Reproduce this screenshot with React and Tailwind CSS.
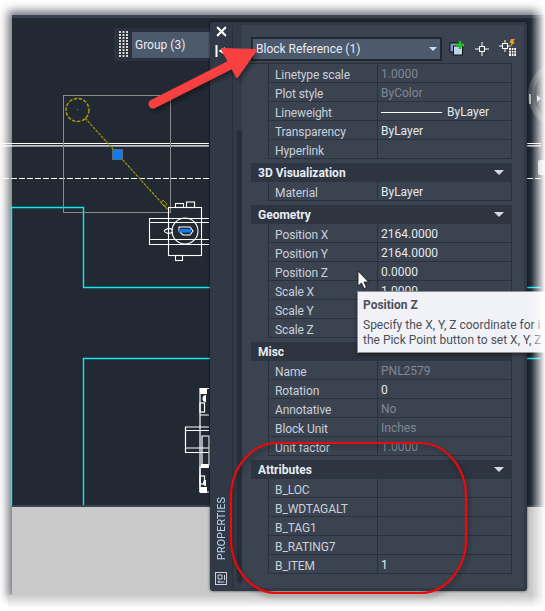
import React from 'react';
import { X } from 'lucide-react';

const Row = ({ label, value, dim, children }) => (
    <div className="flex h-[19px] ml-[17px] border-b border-[#2a313c]">
        <div className="w-[110px] shrink-0 border-x border-[#2a313c] pl-[6px] text-[#c9d0da] leading-[22px] tracking-[-0.1px] truncate">{label}</div>
        <div className={`flex-1 border-r border-[#2a313c] pl-[3px] pt-[2px] leading-[16px] flex items-center ${dim ? 'text-[#7f8794]' : 'text-[#e4e8ee]'}`}>
            {children || value}
        </div>
    </div>
);

const Section = ({ title, rows, arrow = true }) => (
    <div className="mt-[4px]">
        <div className="h-[19px] bg-[#2e3440] flex items-center justify-between pl-[7px] pr-[8px] font-bold text-[#e8edf4]">
            <span>{title}</span>
            {arrow && <span className="w-0 h-0 border-x-[5px] border-x-transparent border-t-[5px] border-t-[#d5d9df]"></span>}
        </div>
        {rows.map((r) => <Row key={r.label} {...r} />)}
    </div>
);

const general = [
    { label: 'Linetype scale', value: '1.0000', dim: true },
    { label: 'Plot style', value: 'ByColor', dim: true },
    {
        label: 'Lineweight',
        children: (
            <span className="flex items-center gap-[5px]">
                <span className="w-[61px] h-px bg-white"></span>ByLayer
            </span>
        ),
    },
    { label: 'Transparency', value: 'ByLayer' },
    { label: 'Hyperlink', value: '' },
];
const viz = [{ label: 'Material', value: 'ByLayer' }];
const geometry = [
    { label: 'Position X', value: '2164.0000' },
    { label: 'Position Y', value: '2164.0000' },
    { label: 'Position Z', value: '0.0000' },
    { label: 'Scale X', value: '1.0000' },
    { label: 'Scale Y', value: '' },
    { label: 'Scale Z', value: '' },
];
const misc = [
    { label: 'Name', value: 'PNL2579', dim: true },
    { label: 'Rotation', value: '0' },
    { label: 'Annotative', value: 'No', dim: true },
    { label: 'Block Unit', value: 'Inches', dim: true },
    { label: 'Unit factor', value: '1.0000', dim: true },
];
const attributes = [
    { label: 'B_LOC', value: '' },
    { label: 'B_WDTAGALT', value: '' },
    { label: 'B_TAG1', value: '' },
    { label: 'B_RATING7', value: '' },
    { label: 'B_ITEM', value: '1' },
];

// the drawing on the model space canvas
const CanvasDrawing = () => (
    <svg className="absolute left-0 top-0" width="545" height="611" fill="none">
        {/* view cube ring, mostly faded out */}
        <circle cx="562" cy="95" r="31" stroke="#4b5058" strokeWidth="6" />
        <path d="M529 94H531V104H529Z" fill="#b8b8b8" />
        <path d="M537 95L541 98.5L537 102Z" fill="#d8d8d8" />
        <rect x="538" y="160" width="12" height="15" rx="2" fill="#c4c6c9" />
        {/* block outlines */}
        <path d="M11.5 505V207.5H83.5V287.5H210M83.5 505V358.5H210" stroke="#0cecf0" strokeWidth="1.4" />
        <path d="M527 287.5H541M527 358.5H541" stroke="#0cecf0" strokeWidth="1.4" />
        <path d="M2 143.5H209M2 145.8H209M527 143.5H541M527 145.8H541" stroke="#fff" strokeWidth="1.2" />
        <path d="M3 178.5H209M527 178.5H541" stroke="#fff" strokeDasharray="6 2" />
        <rect x="63.5" y="95.5" width="107" height="117" stroke="#8b8b8b" />
        {/* grip circle and leader */}
        <circle cx="77.5" cy="110" r="11.5" stroke="#a8a400" strokeWidth="1.4" strokeDasharray="3.5 1.5" />
        <rect x="77" y="109" width="1" height="1" fill="#c86a20" />
        <path d="M85 118L168 210" stroke="#9c9800" strokeWidth="1.2" strokeDasharray="3 1" />
        <path d="M163 200L167 204L165 207L161 203Z" stroke="#9c9800" />
        <rect x="112.5" y="149.5" width="10" height="10" fill="#0a7df5" stroke="#5d6a78" />
        {/* symbol */}
        <g stroke="#fff" strokeWidth="1.1">
            <rect x="168.5" y="207.5" width="33" height="48" />
            <rect x="175.5" y="203.5" width="8" height="4" />
            <rect x="186.5" y="202" width="8" height="5.5" />
            <rect x="175.5" y="255.5" width="7" height="5" />
            <path d="M209 218.5H149.5V244.5H209M149.5 222.5H209M149.5 239.5H209" />
            <circle cx="185" cy="231" r="13" />
            <path d="M164 231C166 228 170 228 173 230M164 231C166 234 170 234 173 232M179 227H190L193 231L190 235H183L179 231Z" />
        </g>
        <rect x="179" y="229" width="12" height="3.5" fill="#0a7df5" />
        {/* second symbol, cut off by the palette */}
        <g stroke="#fff" strokeWidth="1.2">
            <path d="M209 388.5H200V415H209M200 415V492M209 427H185.5V452.5H209M185.5 430.5H209M185.5 448H209" />
            <path d="M209 467H200V492H209M202 436H209V465H202Z" />
            <rect x="200" y="403" width="4.5" height="9" />
            <rect x="200" y="476" width="4.5" height="8" />
        </g>
        <path d="M200 388H207V394H200ZM201 464H209V468H201ZM200 487H207V493H200Z" fill="#fff" />
        <path d="M206 395a3.5 3.5 0 1 0 0 7ZM206 480a3 3 0 1 0 0 6Z" fill="#fff" />
    </svg>
);

const GripDots = () => (
    <svg width="9" height="27" fill="#d8d8d8" className="shrink-0">
        {[0, 1, 2, 3, 4, 5, 6, 7, 8].map((i) => (
            <g key={i}>
                <rect x="0" y={i * 3} width="2" height="2" />
                <rect x="3.5" y={i * 3} width="2" height="2" />
                <rect x="7" y={i * 3} width="2" height="2" />
            </g>
        ))}
    </svg>
);

export default function App() {
    return (
        <div className="relative w-[545px] h-[611px] bg-white overflow-hidden font-['Roboto',sans-serif] text-[12px]">
            {/* app window */}
            <div className="absolute left-[12px] top-[15px] w-[540px] h-[581px] bg-[#c9c9c9] shadow-[-1px_-1px_9px_3px_rgba(30,35,45,0.65)]">
                <div className="h-[3px] bg-[#3b4352]"></div>
                <div className="h-[487px] bg-[#222933]"></div>
                <div className="h-[2px] bg-[#3b4352]"></div>
            </div>
            <div className="absolute left-[8px] top-[595px] w-[540px] h-[13px] bg-gradient-to-b from-[#c9c9c9] to-white"></div>
            <CanvasDrawing />

            {/* selection filter */}
            <div className="absolute left-[114px] top-[28px] h-[33px] w-[100px] flex bg-[#2b323e] pl-[5px] items-center">
                <GripDots />
                <div className="ml-[3px] flex-1 h-[28px] bg-[#4d5a6e] pl-[3px] leading-[26px] text-[#e6ebf2] border border-[#27303b]">Group (3)</div>
            </div>

            {/* properties palette */}
            <div className="absolute left-[210px] top-[22px] w-[317px] h-[569px] flex bg-[#323946] rounded-[3px] shadow-[0_0_3px_rgba(0,0,0,0.7)] pt-[3px] pr-[3px] pb-[3px]">
                <div className="w-[22px] shrink-0 flex flex-col items-center relative -mt-[3px]">
                    <X size={15} strokeWidth={3.5} className="text-white mt-[2px]" />
                    <svg className="mt-[6px]" width="14" height="12" fill="none">
                        <path d="M2.5 0V12" stroke="#fff" strokeWidth="2" />
                        <path d="M11 3L6 6L11 9" stroke="#fff" strokeWidth="1.5" />
                    </svg>
                    <svg className="mt-[8px] ml-[6px]" width="7" height="7" fill="none" stroke="#8b929d">
                        <path d="M3.5 0V7M0 3.5H7" />
                    </svg>
                    <div className="absolute bottom-[28px] left-[4px] [writing-mode:vertical-rl] rotate-180 text-[#b9d6ee] text-[11px]">PROPERTIES</div>
                    <svg className="absolute bottom-[3px] left-[5px]" width="12" height="13" fill="none" stroke="#c9d0da">
                        <rect x="0.5" y="0.5" width="11" height="12" />
                        <path d="M3 3H7V7H3ZM9.5 3V8M2.5 10H9.5M4 8.5V11" />
                    </svg>
                </div>
                <div className="flex-1 flex bg-[#3b4351] border-l border-[#2a303b] rounded-[3px] overflow-hidden">
                    <div className="w-[9px] shrink-0 bg-[#343b48] flex flex-col items-end">
                        <div className="w-[5px] mt-[105px] mb-[5px] flex-1 bg-[#272e39] rounded-full"></div>
                    </div>
                    <div className="ml-[9px] w-[261px] mt-[12px]">
                        <div className="flex items-center h-[24px] w-[191px] bg-[#4d5a6e] border-2 border-[#222830] pl-[3px] pr-[3px] justify-between text-[#e6ebf2] relative">
                            <span>Block Reference (1)</span>
                            <span className="w-0 h-0 border-x-[4px] border-x-transparent border-t-[4px] border-t-[#d5d9df]"></span>
                            <div className="absolute left-[196px] top-0 flex items-center gap-[10px]">
                                <svg width="16" height="17" fill="none">
                                    <rect x="1" y="3" width="10" height="9" fill="#7da0c8" stroke="#111" />
                                    <rect x="4.5" y="6" width="9" height="9" fill="#bdd4ee" stroke="#111" />
                                    <path d="M11 1V9M7 5H15" stroke="#1fc21f" strokeWidth="2.6" />
                                </svg>
                                <svg width="14" height="14" fill="none" stroke="#fff">
                                    <rect x="4.5" y="4.5" width="5" height="5" />
                                    <path d="M7 0V4M7 10V14M0 7H4M10 7H14" />
                                </svg>
                                <svg width="17" height="19" fill="none">
                                    <g stroke="#fff">
                                        <rect x="3.5" y="4.5" width="5" height="5" />
                                        <path d="M6 1V4M6 10V13M0 7H3M9 7H11" />
                                    </g>
                                    <path d="M12 0H16L14 3H16L11 8L12.5 4H10.5Z" fill="#f0a020" />
                                    <rect x="10" y="9" width="7" height="8" fill="#fff" />
                                    <path d="M10 11.5H17M10 14H17M12.5 9V17M14.8 9V17" stroke="#222" strokeWidth="0.7" />
                                </svg>
                            </div>
                        </div>
                        <div className="mt-[2px]">
                            <div className="border-t border-[#2a313c]">
                                {general.map((r) => <Row key={r.label} {...r} />)}
                            </div>
                            <Section title="3D Visualization" rows={viz} />
                            <Section title="Geometry" rows={geometry} />
                            <Section title="Misc" rows={misc} arrow={false} />
                            <Section title="Attributes" rows={attributes} />
                        </div>
                    </div>
                </div>
            </div>

            {/* tooltip */}
            <div className="absolute left-[357px] top-[291px] w-[188px] h-[62px] bg-[#f1f2f7] border-t border-l border-b border-[#8f8f8f] pl-[5px] pt-[6px] text-[#4b5057] leading-[15px] whitespace-nowrap overflow-hidden shadow-[0_2px_4px_rgba(0,0,0,0.4)]">
                <div className="font-bold mb-[5px]">Position Z</div>
                <div>Specify the X, Y, Z coordinate for i</div>
                <div>the Pick Point button to set X, Y, Z</div>
            </div>

            {/* right edge of the screenshot fades out */}
            <div className="absolute left-[531px] top-0 w-[14px] h-[611px] bg-gradient-to-r from-transparent to-white"></div>

            {/* annotations */}
            <svg className="absolute left-0 top-0 pointer-events-none" width="545" height="611" fill="none">
                <defs>
                    <filter id="sh" x="-20%" y="-20%" width="140%" height="140%">
                        <feDropShadow dx="2" dy="3" stdDeviation="2.5" floodColor="#000" floodOpacity="0.4" />
                    </filter>
                </defs>
                <g filter="url(#sh)">
                    <path d="M153 104L232 64" stroke="#f94040" strokeWidth="9" strokeLinecap="round" />
                    <path d="M256 50L237 77L222 49Z" fill="#f94040" stroke="#f94040" strokeWidth="2" strokeLinejoin="round" />
                </g>
                <g filter="url(#sh)">
                    <rect x="231" y="443" width="235" height="150" rx="46" ry="54" stroke="#e80808" strokeWidth="2.2" />
                </g>
            </svg>

            {/* cursor */}
            <svg className="absolute left-[357px] top-[270px]" width="13" height="20">
                <path d="M1 1V16L4.5 13L7 18.5L9.5 17.5L7 12H11.5Z" fill="#fff" stroke="#111" strokeWidth="0.8" />
            </svg>
        </div>
    );
}
